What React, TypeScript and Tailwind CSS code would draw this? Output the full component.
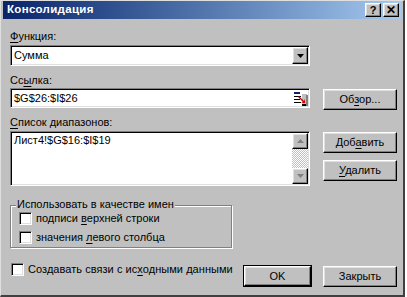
import React from "react";

const raised =
  "border border-t-white border-l-white border-r-black border-b-black shadow-[inset_-1px_-1px_0_#808080,inset_1px_1px_0_#dfdfdf]";
const sunken =
  "border border-t-[#808080] border-l-[#808080] border-r-white border-b-white shadow-[inset_1px_1px_0_#000,inset_-1px_-1px_0_#dfdfdf]";

const Acc: React.FC<{ pre?: string; k: string; post?: string }> = ({ pre, k, post }) => (
  <span>
    {pre}
    <span className="underline underline-offset-[2px]">{k}</span>
    {post}
  </span>
);

const Button: React.FC<{ children: React.ReactNode; className?: string }> = ({ children, className }) => (
  <div className={`flex items-center justify-center bg-[#c0c0c0] text-black ${raised} ${className ?? ""}`}>
    {children}
  </div>
);

const Check: React.FC<{ children: React.ReactNode }> = ({ children }) => (
  <div className="flex items-center gap-[4px] h-[13px]">
    <div className={`w-[13px] h-[13px] bg-white ${sunken}`} />
    <span className="leading-[13px]">{children}</span>
  </div>
);

const Arrow: React.FC<{ up?: boolean; color?: string }> = ({ up, color = "#000" }) => (
  <svg width="7" height="4" viewBox="0 0 7 4">
    <polygon points={up ? "0,4 7,4 3.5,0" : "0,0 7,0 3.5,4"} fill={color} />
  </svg>
);

const RefIcon = () => (
  <svg width="15" height="16" viewBox="0 0 15 16">
    <rect x="0" y="0" width="15" height="16" fill="#fff" />
    <rect x="1" y="2" width="6" height="2" fill="#0a246a" />
    <rect x="1" y="6" width="7" height="1" fill="#000" />
    <rect x="1" y="9" width="6" height="1" fill="#000" />
    <rect x="1" y="12" width="7" height="1" fill="#000" />
    <rect x="9" y="4" width="5" height="11" fill="#c0c0c0" />
    <polygon points="6,6 11,11 12,9 12,13 8,13 10,12 5,7" fill="#d00000" />
    <rect x="9" y="14" width="6" height="2" fill="#000" />
    <rect x="13" y="5" width="2" height="11" fill="#808080" />
  </svg>
);

export default function App() {
  return (
    <div className="w-[407px] h-[297px] bg-white overflow-hidden font-['Liberation_Sans',Arial,sans-serif] text-[11px] text-black">
      <div className="w-[405px] h-[297px] bg-[#c0c0c0] border-t border-l border-t-[#dfdfdf] border-l-[#dfdfdf] border-r-2 border-b-2 border-r-[#404040] border-b-[#404040] px-[2px] flex flex-col">
        {/* title bar */}
        <div className="h-[18px] flex items-center justify-between bg-gradient-to-r from-[#0a246a] to-[#a6caf0] pl-[4px] pr-[2px]">
          <span className="text-white font-bold text-[11.5px] tracking-[0.3px]">Консолидация</span>
          <div className="flex gap-[2px]">
            <Button className="w-[16px] h-[14px] font-bold text-[11px] leading-none">?</Button>
            <Button className="w-[16px] h-[14px] font-bold text-[12px] leading-none">✕</Button>
          </div>
        </div>

        <div className="pl-[7px] flex flex-col">
          <div className="mt-[11px] h-[13px] leading-[13px]">
            <Acc k="Ф" post="ункция:" />
          </div>
          <div className={`mt-[2px] w-[300px] h-[21px] bg-white flex items-center ${sunken}`}>
            <span className="pl-[3px] flex-1">Сумма</span>
            <Button className="w-[16px] h-[17px] mr-px">
              <Arrow />
            </Button>
          </div>

          <div className="mt-[8px] h-[13px] leading-[13px]">
            <Acc pre="Сс" k="ы" post="лка:" />
          </div>
          <div className="mt-px flex items-start">
            <div className={`w-[300px] h-[20px] bg-white flex items-center ${sunken}`}>
              <span className="pl-[3px] flex-1">$G$26:$I$26</span>
              <div className="mr-px">
                <RefIcon />
              </div>
            </div>
            <Button className="ml-[13px] mt-px w-[74px] h-[21px]">
              <Acc pre="Об" k="з" post="ор..." />
            </Button>
          </div>

          <div className="mt-[6px] h-[13px] leading-[13px]">
            <Acc k="С" post="писок диапазонов:" />
          </div>
          <div className="mt-[2px] flex items-start">
            <div className={`w-[300px] h-[55px] bg-white flex ${sunken}`}>
              <span className="pl-[3px] pt-[2px] flex-1 leading-[13px]">Лист4!$G$16:$I$19</span>
              <div className="w-[16px] mr-px my-px flex flex-col">
                <Button className="h-[16px]">
                  <Arrow up color="#808080" />
                </Button>
                <div className="flex-1 bg-[image:repeating-conic-gradient(#ffffff_0_25%,#c0c0c0_0_50%)] bg-[length:2px_2px]" />
                <Button className="h-[16px]">
                  <Arrow color="#808080" />
                </Button>
              </div>
            </div>
            <div className="ml-[13px] mt-px flex flex-col gap-[7px]">
              <Button className="w-[74px] h-[21px]">
                <Acc pre="Доб" k="а" post="вить" />
              </Button>
              <Button className="w-[74px] h-[21px]">
                <Acc k="У" post="далить" />
              </Button>
            </div>
          </div>

          <div className="relative mt-[19px] w-[222px] h-[43px] border border-[#808080] shadow-[1px_1px_0_#ffffff,inset_1px_1px_0_#ffffff] pl-[8px] pt-[6px] flex flex-col gap-[6px]">
            <span className="absolute left-[5px] top-[-8px] bg-[#c0c0c0] px-px leading-[13px]">
              Использовать в качестве имен
            </span>
            <Check>
              <Acc pre="подписи " k="в" post="ерхней строки" />
            </Check>
            <Check>
              <Acc pre="значения " k="л" post="евого столбца" />
            </Check>
          </div>

          <div className="mt-[15px] flex items-start">
            <div className="ml-px w-[231px] tracking-[0.05px]">
              <Check>
                <Acc pre="Создавать связи с ис" k="х" post="одными данными" />
              </Check>
            </div>
            <div className="mt-[2px] ml-px w-[69px] h-[22px] border border-black">
              <Button className="w-full h-full">OK</Button>
            </div>
            <Button className="ml-[11px] mt-[3px] w-[74px] h-[21px]">Закрыть</Button>
          </div>
        </div>
      </div>
    </div>
  );
}
